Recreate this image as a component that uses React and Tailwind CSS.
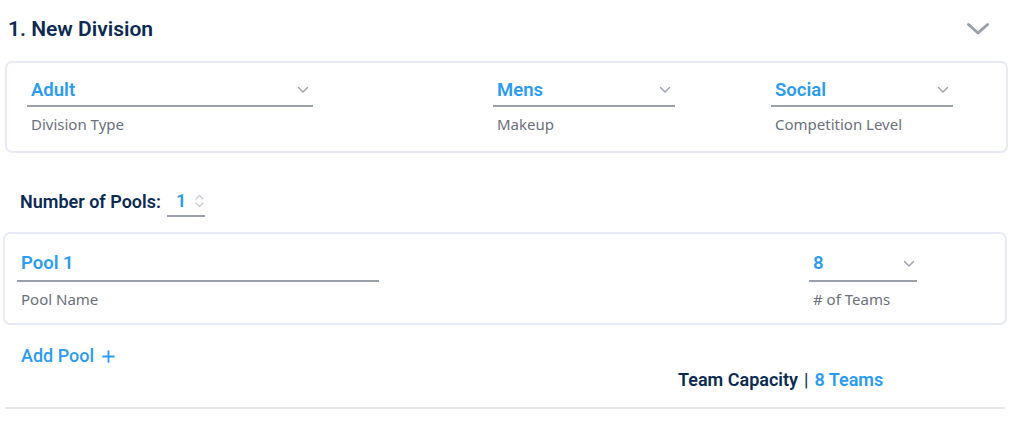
import React from "react";

const Chevron = ({ className = "" }) => (
  <svg className={className} viewBox="0 0 12 8" fill="none" stroke="currentColor" strokeWidth="1.4" strokeLinecap="round" strokeLinejoin="round">
    <path d="M1.5 1.5 L6 6 L10.5 1.5" />
  </svg>
);

const SelectField = ({ value, label, widthClass }) => (
  <div className={`${widthClass} flex flex-col`}>
    <div className="flex items-center justify-between h-[32px] border-b-2 border-[#9ba1ac] pl-1 pr-1">
      <span className="text-[18.5px] font-semibold text-[#2b9cf3] font-['Roboto',sans-serif] leading-none">{value}</span>
      <Chevron className="w-[12px] h-[8px] text-[#9ba1ac]" />
    </div>
    <span className="pl-1 mt-[10px] text-[15px] text-[#6b717c] font-['Noto_Sans',sans-serif] leading-none">{label}</span>
  </div>
);

export default function App() {
  return (
    <div className="w-[1020px] h-[429px] bg-white font-['Roboto',sans-serif]">
      <div className="flex items-center justify-between pl-[8px] pr-[30px] pt-[12px] h-[47px]">
        <h1 className="text-[21px] font-semibold text-[#0c2b52] leading-none">1. New Division</h1>
        <svg className="w-[24px] h-[14px] text-[#9aa0ab] -mt-[2px]" viewBox="0 0 24 14" fill="none" stroke="currentColor" strokeWidth="3" strokeLinecap="round" strokeLinejoin="round">
          <path d="M2.5 2.5 L12 11 L21.5 2.5" />
        </svg>
      </div>

      <div className="ml-[5px] mt-[14px] w-[1003px] h-[92px] border-2 border-[#e8ebf5] rounded-[7px] flex pl-[20px] pt-[12px]">
        <SelectField value="Adult" label="Division Type" widthClass="w-[286px]" />
        <div className="w-[180px]" />
        <SelectField value="Mens" label="Makeup" widthClass="w-[182px]" />
        <div className="w-[96px]" />
        <SelectField value="Social" label="Competition Level" widthClass="w-[182px]" />
      </div>

      <div className="flex items-end pl-[20px] mt-[33px] h-[31px]">
        <span className="text-[18px] font-semibold text-[#0c2b52] leading-none pb-[6px]">Number of Pools:</span>
        <div className="ml-[6px] w-[38px] h-[31px] border-b-2 border-[#9ba1ac] flex items-center justify-between pl-[9px] pr-[1px]">
          <span className="text-[18px] font-semibold text-[#2b9cf3] leading-none">1</span>
          <svg className="w-[9px] h-[14px] text-[#c6cad2]" viewBox="0 0 9 14" fill="none" stroke="currentColor" strokeWidth="1.2" strokeLinecap="round" strokeLinejoin="round">
            <path d="M1 5 L4.5 1.5 L8 5" />
            <path d="M1 9 L4.5 12.5 L8 9" />
          </svg>
        </div>
      </div>

      <div className="ml-[3px] mt-[15px] w-[1004px] h-[93px] border-2 border-[#e8ebf5] rounded-[7px] flex justify-between pl-[12px] pr-[88px] pt-[13px]">
        <div className="w-[362px] flex flex-col">
          <div className="flex items-center h-[35px] border-b-2 border-[#9ba1ac] pl-1">
            <span className="text-[18.5px] font-semibold text-[#2b9cf3] leading-none">Pool 1</span>
          </div>
          <span className="pl-1 mt-[10px] text-[15px] text-[#6b717c] font-['Noto_Sans',sans-serif] leading-none">Pool Name</span>
        </div>
        <div className="w-[108px] flex flex-col">
          <div className="flex items-center justify-between h-[35px] border-b-2 border-[#9ba1ac] pl-1 pr-[2px]">
            <span className="text-[18.5px] font-semibold text-[#2b9cf3] leading-none">8</span>
            <Chevron className="w-[12px] h-[8px] text-[#9ba1ac]" />
          </div>
          <span className="pl-1 mt-[10px] text-[15px] text-[#6b717c] font-['Noto_Sans',sans-serif] leading-none">#&nbsp;of Teams</span>
        </div>
      </div>

      <div className="pl-[21px] mt-[22px] flex items-center gap-[8px]">
        <span className="text-[18px] font-medium text-[#2b9cf3] leading-none">Add Pool</span>
        <svg className="w-[13px] h-[13px] text-[#2b9cf3]" viewBox="0 0 12 12" fill="none" stroke="currentColor" strokeWidth="1.7" strokeLinecap="round">
          <path d="M6 1 V11 M1 6 H11" />
        </svg>
      </div>

      <div className="flex pl-[678px] mt-[6px]">
        <span className="text-[18px] font-semibold text-[#0c2b52] leading-none">Team Capacity</span>
        <span className="text-[18px] text-[#0c2b52] leading-none mx-[6px]">|</span>
        <span className="text-[18px] font-semibold text-[#2b9cf3] leading-none">8 Teams</span>
      </div>

      <div className="ml-[5px] mt-[18px] w-[1000px] h-[2px] bg-[#e6e6e6]" />
    </div>
  );
}
